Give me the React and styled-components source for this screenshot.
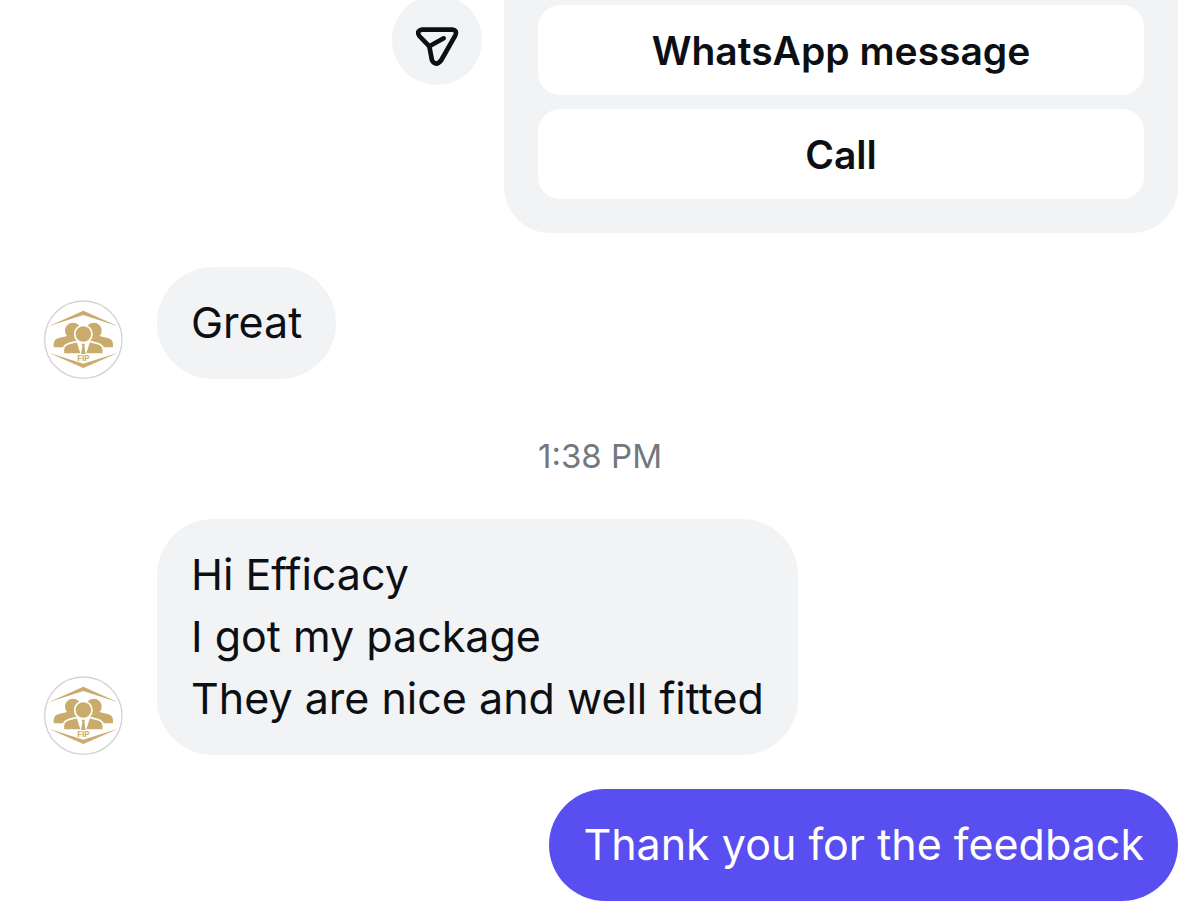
import React from 'react';
import styled, { createGlobalStyle } from 'styled-components';

const GlobalStyle = createGlobalStyle`
    *, *::before, *::after {
        box-sizing: border-box;
    }
    body {
        margin: 0;
        background: #ffffff;
        color: #0c1014;
        font-family: Inter, "Liberation Sans", sans-serif;
    }
`;

// Thread is anchored to its newest message, older ones run off the top
const Thread = styled.main`
    display: flex;
    flex-direction: column;
    justify-content: flex-end;
    height: 100vh;
    overflow: hidden;
    padding: 0 22px 10px 44px;
`;

const Row = styled.div`
    display: flex;
    flex-shrink: 0;
    align-items: ${props => props.$align || 'flex-end'};
    justify-content: ${props => (props.$sent ? 'flex-end' : 'flex-start')};
    gap: ${props => (props.$sent ? '22px' : '34px')};
    margin-top: 34px;
`;

const Card = styled.section`
    display: flex;
    flex-direction: column;
    justify-content: flex-end;
    gap: 14px;
    width: 100%;
    max-width: 674px;
    min-height: 386px;
    padding: 34px;
    border-radius: 46px;
    background: #f2f3f5;
`;

const CardButton = styled.button`
    height: 90px;
    border: 0;
    border-radius: 22px;
    background: #ffffff;
    color: inherit;
    font-family: inherit;
    font-size: 39px;
    font-weight: 600;
    cursor: pointer;
`;

const ShareButton = styled.button`
    flex-shrink: 0;
    width: 90px;
    height: 90px;
    padding: 0;
    border: 0;
    border-radius: 50%;
    background: #f2f3f5;
    color: #0c1014;
    cursor: pointer;
    svg {
        display: block;
        width: 100%;
        height: 100%;
    }
`;

const Bubble = styled.div`
    padding: 24px 34px 26px;
    border-radius: 56px;
    background: ${props => (props.$sent ? '#594ef0' : '#f2f3f5')};
    color: ${props => (props.$sent ? '#ffffff' : 'inherit')};
    font-size: 43px;
    line-height: 62px;
`;

const Line = styled.p`
    margin: 0;
`;

const Time = styled.time`
    flex-shrink: 0;
    align-self: center;
    margin: 56px 22px 8px 0;
    color: #737780;
    font-size: 33px;
    line-height: 42px;
`;

const AvatarSvg = styled.svg`
    display: block;
    flex-shrink: 0;
    width: 79px;
    height: 79px;
`;

const Avatar = () => (
    <AvatarSvg viewBox="24 25 237 237" role="img" aria-label="FIP">
        <circle cx="142" cy="144" r="116" fill="#ffffff" stroke="#d3d3d6" strokeWidth="4" />
        <g fill="#c9ab6c">
            <path d="M38 104 L142 57 L246 104 L142 70 Z" />
            <path d="M38 183 L142 229 L246 183 L142 216 Z" />
            <circle cx="111" cy="117" r="24" />
            <circle cx="173" cy="117" r="24" />
            <path d="M53 167 V156 Q54 143 69 139 L94 133 Q105 144 125 138 L133 167 Z" />
            <path d="M231 167 V156 Q230 143 215 139 L190 133 Q179 144 159 138 L151 167 Z" />
        </g>
        <g fill="#c9ab6c" stroke="#ffffff" strokeWidth="5">
            <path d="M82 187 V173 Q84 160 98 156 L122 149 Q142 162 162 149 L186 156 Q200 160 202 173 V187 Z" />
            <circle cx="142" cy="127" r="26" />
        </g>
        <path d="M122 151 L134 188 H150 L162 151 Q142 163 122 151 Z" fill="#ffffff" />
        <path d="M137 156 H147 L145 164 L149 187 H135 L139 164 Z" fill="#c9ab6c" />
        <text
            x="142"
            y="207"
            textAnchor="middle"
            fill="#c9ab6c"
            fontFamily="Inter, sans-serif"
            fontSize="24"
            fontWeight="700"
        >
            FIP
        </text>
    </AvatarSvg>
);

const ShareIcon = () => (
    <svg
        viewBox="36 -15 270 270"
        fill="none"
        stroke="currentColor"
        strokeWidth="14"
        strokeLinecap="round"
        strokeLinejoin="round"
        aria-hidden="true"
    >
        <path d="M125 89 H217 Q233 91 226 106 L184 180 Q168 201 156 181 L148 139 L118 108 Q108 93 125 89 Z" />
        <path d="M148 139 L191 115" />
    </svg>
);

const received = [
    ['Great'],
    ['Hi Efficacy', 'I got my package', 'They are nice and well fitted'],
];

const Received = ({ lines }) => (
    <Row>
        <Avatar />
        <Bubble>
            {lines.map(line => <Line key={line}>{line}</Line>)}
        </Bubble>
    </Row>
);

const App = () => {
    return (
        <>
            <GlobalStyle />
            <Thread>
                <Row $sent $align="center">
                    <ShareButton aria-label="Share">
                        <ShareIcon />
                    </ShareButton>
                    <Card>
                        <CardButton>WhatsApp message</CardButton>
                        <CardButton>Call</CardButton>
                    </Card>
                </Row>
                <Received lines={received[0]} />
                <Time>1:38 PM</Time>
                <Received lines={received[1]} />
                <Row $sent>
                    <Bubble $sent>
                        <Line>Thank you for the feedback</Line>
                    </Bubble>
                </Row>
            </Thread>
        </>
    );
}

export default App;
